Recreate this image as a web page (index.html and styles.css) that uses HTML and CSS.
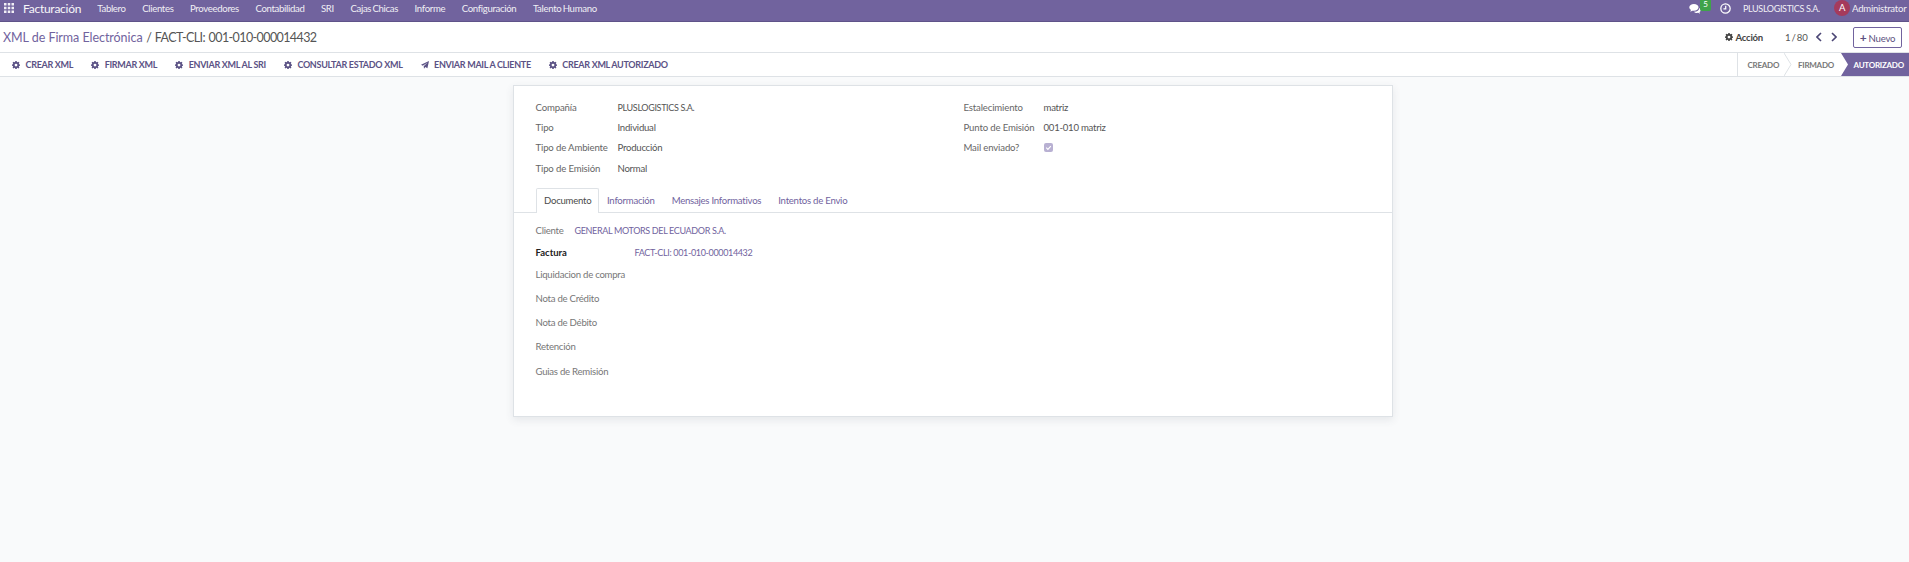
FILE: index.html
```html
<!DOCTYPE html>
<html lang="es">
<head>
    <meta charset="UTF-8">
    <meta name="viewport" content="width=device-width, initial-scale=1.0">
    <title>XML de Firma Electrónica</title>
    <link rel="stylesheet" href="styles.css">
</head>
<body>
    <svg width="0" height="0" class="defs">
        <symbol id="gear" viewBox="0 0 16 16">
            <path fill-rule="evenodd" d="M6.600 0h2.800l.4 2.200 1.200.5 1.900-1.300 2 2-1.300 1.900.5 1.200 1.900.3v2.800l-1.900.4-.5 1.200 1.300 1.800-2 2-1.900-1.300-1.200.5-.4 2.200H6.600l-.4-2.200-1.200-.5-1.900 1.300-2-2 1.300-1.800-.5-1.200L0 9.600V6.800l1.900-.3.5-1.200-1.300-1.900 2-2L5 2.700l1.200-.5zM8 5.300a2.800 2.800 0 1 0 0 5.600 2.800 2.800 0 0 0 0-5.600z"/>
        </symbol>
        <symbol id="plane" viewBox="0 0 16 16">
            <path d="M16 0 12.800 14.400 8.600 12.200 6 15.400 5.400 10.600 13.200 3 3.600 9.600 0 7.600z"/>
        </symbol>
    </svg>

    <nav class="navbar">
        <div class="nav-left">
            <svg class="apps" viewBox="0 0 12 12">
                <path d="M0 0h3v3H0zM4.500 0h3v3h-3zM9 0h3v3H9zM0 4.500h3v3H0zM4.500 4.500h3v3h-3zM9 4.500h3v3H9zM0 9h3v3H0zM4.500 9h3v3h-3zM9 9h3v3H9z"/>
            </svg>
            <span class="app-name">Facturación</span>
            <a>Tablero</a>
            <a>Clientes</a>
            <a>Proveedores</a>
            <a>Contabilidad</a>
            <a>SRI</a>
            <a>Cajas Chicas</a>
            <a>Informe</a>
            <a>Configuración</a>
            <a>Talento Humano</a>
        </div>
        <div class="nav-right">
            <span class="chat">
                <svg viewBox="0 0 16 14"><path d="M6.500 0C2.900 0 0 2 0 4.700c0 1.500.9 2.800 2.300 3.700L1.400 10.700l2.900-1.400c.7.100 1.400.200 2.200.200 3.600 0 6.500-2.100 6.500-4.800S10.100 0 6.500 0z"/><path d="M14 5.500c0 3-3 5.300-7 5.300h-.600c1 1 2.700 1.700 4.600 1.700.5 0 1-.100 1.500-.200l2.500 1.200-.7-2c1-.7 1.700-1.800 1.700-3 0-1.300-.8-2.400-2-3z"/></svg>
                <b class="badge">5</b>
            </span>
            <svg class="clock" viewBox="0 0 16 16"><circle cx="8" cy="8" r="6.800"/><path d="M8.300 4v4.500H5"/></svg>
            <span class="company caps">PLUSLOGISTICS S.A.</span>
            <span class="avatar">A</span>
            <span class="user">Administrator</span>
        </div>
    </nav>

    <div class="control-title">
        <div class="breadcrumb"><a>XML de Firma Electrónica</a> <span>/ FACT-CLI: 001-010-000014432</span></div>
        <div class="control-right">
            <span class="action"><svg class="ico"><use href="#gear"/></svg>Acción</span>
            <span class="pager">1 / 80</span>
            <svg class="chev" viewBox="0 0 6 10"><path d="M5 1 1 5l4 4"/></svg>
            <svg class="chev" viewBox="0 0 6 10"><path d="m1 1 4 4-4 4"/></svg>
            <button class="btn-new"><span class="plus">+</span>Nuevo</button>
        </div>
    </div>

    <div class="control-buttons">
        <div class="actions">
            <a><svg class="ico"><use href="#gear"/></svg>CREAR XML</a>
            <a><svg class="ico"><use href="#gear"/></svg>FIRMAR XML</a>
            <a><svg class="ico"><use href="#gear"/></svg>ENVIAR XML AL SRI</a>
            <a><svg class="ico"><use href="#gear"/></svg>CONSULTAR ESTADO XML</a>
            <a><svg class="ico"><use href="#plane"/></svg>ENVIAR MAIL A CLIENTE</a>
            <a><svg class="ico"><use href="#gear"/></svg>CREAR XML AUTORIZADO</a>
        </div>
        <div class="statusbar">
            <span class="st st-created">CREADO
                <svg class="st-arrow" viewBox="0 0 8 23"><path d="M0 0l7 11.500L0 23"/></svg>
            </span>
            <span class="st st-signed">FIRMADO</span>
            <span class="st st-done">AUTORIZADO</span>
        </div>
    </div>

    <main class="content">
        <section class="sheet">
            <div class="group">
                <div class="fields">
                    <div class="row"><label>Compañía</label><span class="caps">PLUSLOGISTICS S.A.</span></div>
                    <div class="row"><label>Tipo</label><span>Individual</span></div>
                    <div class="row"><label>Tipo de Ambiente</label><span>Producción</span></div>
                    <div class="row row-last"><label>Tipo de Emisión</label><span>Normal</span></div>
                </div>
                <div class="fields fields-right">
                    <div class="row"><label>Estalecimiento</label><span>matriz</span></div>
                    <div class="row"><label>Punto de Emisión</label><span>001-010 matriz</span></div>
                    <div class="row"><label>Mail enviado?</label><span class="check"><svg viewBox="0 0 10 10"><path d="m2.500 5.200 1.800 1.800 3.300-3.600"/></svg></span></div>
                </div>
            </div>

            <div class="tabs">
                <a class="tab active">Documento</a>
                <a class="tab">Información</a>
                <a class="tab">Mensajes Informativos</a>
                <a class="tab">Intentos de Envio</a>
            </div>

            <div class="tab-body">
                <div class="client"><label>Cliente</label><a class="caps">GENERAL MOTORS DEL ECUADOR S.A.</a></div>
                <div class="doc doc-invoice"><label>Factura</label><a class="caps">FACT-CLI: 001-010-000014432</a></div>
                <div class="doc doc-first"><label>Liquidacion de compra</label></div>
                <div class="doc"><label>Nota de Crédito</label></div>
                <div class="doc"><label>Nota de Débito</label></div>
                <div class="doc"><label>Retención</label></div>
                <div class="doc"><label>Guias de Remisión</label></div>
            </div>
        </section>
    </main>
</body>
</html>
```

FILE: styles.css
```css
* {
    box-sizing: border-box;
}

body {
    margin: 0;
    height: 562px;
    overflow: hidden;
    font-family: Lato, Roboto, sans-serif;
    font-size: 9.600px;
    letter-spacing: -0.250px;
    color: #555;
    background-color: #f9fafb;
    display: flex;
    flex-direction: column;
}

.defs {
    position: absolute;
}

.caps {
    font-size: 9px;
    letter-spacing: -0.350px;
}

/* top bar */
.navbar {
    height: 22px;
    flex: none;
    display: flex;
    justify-content: space-between;
    align-items: center;
    padding: 0 3px 5px 4px;
    background-color: #71639e;
    border-bottom: 1px solid #5f5389;
    color: #fff;
    white-space: nowrap;
}

.nav-left, .nav-right {
    display: flex;
    align-items: center;
}

.apps {
    width: 10px;
    height: 10px;
    fill: #fff;
    opacity: 0.9;
}

.app-name {
    font-size: 12px;
    letter-spacing: -0.250px;
    margin: 0 16px 0 9px;
    opacity: 0.95;
}

.nav-left a {
    margin-right: 16.500px;
    letter-spacing: -0.330px;
    word-spacing: -0.800px;
    opacity: 0.9;
}

.chat {
    position: relative;
    width: 22px;
    height: 16px;
    display: flex;
    align-items: center;
}

.chat svg {
    width: 12px;
    height: 10px;
    fill: #fff;
    margin-top: 2px;
}

.badge {
    position: absolute;
    left: 11px;
    top: 0;
    width: 11px;
    height: 11px;
    background-color: #3fa34a;
    border-radius: 0 0 2px 2px;
    font-size: 8px;
    line-height: 9px;
    font-weight: 400;
    text-align: center;
}

.clock {
    width: 11px;
    height: 11px;
    fill: none;
    stroke: #fff;
    stroke-width: 1.800;
    margin-left: 9px;
}

.company {
    width: 78px;
    margin: 0 13px 0 12px;
    opacity: 0.9;
}

.avatar {
    width: 16px;
    height: 16px;
    border-radius: 50%;
    background-color: #a53a5c;
    font-size: 9.500px;
    line-height: 16px;
    text-align: center;
    margin-right: 2px;
}

.user {
    width: 54px;
    opacity: 0.9;
}

/* control panel */
.control-title {
    height: 31px;
    flex: none;
    display: flex;
    justify-content: space-between;
    align-items: center;
    padding: 0 7px 0 3px;
    background-color: #fff;
    border-bottom: 1px solid #dee2e6;
}

.breadcrumb {
    font-size: 12.500px;
    letter-spacing: -0.600px;
    word-spacing: 1px;
    color: #555;
}

.breadcrumb a {
    color: #71639e;
    letter-spacing: -0.050px;
    word-spacing: 0;
}

.control-right {
    display: flex;
    align-items: center;
}

.ico {
    width: 8px;
    height: 8px;
    fill: currentColor;
    flex: none;
}

.action {
    display: flex;
    align-items: center;
    gap: 2px;
    color: #444;
    font-weight: 700;
}

.pager {
    width: 21px;
    margin: 0 10px 0 22px;
    white-space: nowrap;
    word-spacing: -1px;
}

.chev {
    width: 6px;
    height: 10px;
    fill: none;
    stroke: #4b4675;
    stroke-width: 1.600;
    margin-right: 9px;
}

.btn-new {
    width: 49px;
    height: 21px;
    margin-left: 7px;
    padding: 0;
    border: 1px solid #71639e;
    border-radius: 2px;
    background-color: #fff;
    color: #5c5080;
    font: inherit;
    letter-spacing: inherit;
}

.plus {
    font-size: 12px;
    font-weight: 700;
    margin-right: 2px;
}

.control-buttons {
    height: 24px;
    flex: none;
    display: flex;
    justify-content: space-between;
    padding-left: 12px;
    background-color: #fff;
    border-bottom: 1px solid #dee2e6;
}

.actions {
    display: flex;
    align-items: center;
    gap: 18px;
}

.actions a {
    display: flex;
    align-items: center;
    gap: 5.500px;
    font-size: 9px;
    letter-spacing: -0.300px;
    font-weight: 700;
    color: #5b5285;
}

.statusbar {
    display: flex;
    align-items: stretch;
    font-size: 8px;
    letter-spacing: -0.250px;
    font-weight: 700;
    color: #777;
}

.st {
    display: flex;
    align-items: center;
    position: relative;
}

.st-created {
    width: 60px;
    padding-left: 9.500px;
    border-left: 1px solid #dee2e6;
}

.st-arrow {
    position: absolute;
    right: 5px;
    top: 0;
    width: 8px;
    height: 23px;
    fill: none;
    stroke: #dee2e6;
}

.st-signed {
    width: 44px;
    padding-left: 1px;
}

.st-done {
    width: 68px;
    padding-left: 12.500px;
    color: #fff;
    background-color: #71639e;
    clip-path: polygon(0 0, 100% 0, 100% 100%, 0 100%, 7px 50%);
}

/* form sheet */
.content {
    flex: 1;
    display: flex;
    justify-content: center;
    padding-top: 8px;
}

.sheet {
    width: 880px;
    height: 332px;
    margin-left: -4px;
    background-color: #fff;
    border: 1px solid #dee2e6;
    box-shadow: 0 3px 8px rgba(60, 70, 90, 0.1);
}

.group {
    display: grid;
    grid-template-columns: 428px 1fr;
    padding: 11px 22px 0;
}

.row {
    display: flex;
    align-items: center;
    height: 20px;
}

.row-last {
    height: 22px;
}

.row label {
    width: 82px;
    color: #666;
    letter-spacing: -0.150px;
    white-space: nowrap;
}

.fields-right .row label {
    width: 80px;
}

.check {
    width: 9px;
    height: 9px;
    display: flex;
    border-radius: 2px;
    background-color: #b8b0d2;
}

.check svg {
    width: 9px;
    height: 9px;
    fill: none;
    stroke: #fff;
    stroke-width: 1.300;
}

.tabs {
    display: flex;
    height: 25px;
    margin-top: 9px;
    padding-left: 22px;
    border-bottom: 1px solid #dee2e6;
}

.tab {
    height: 25px;
    padding: 0 7.500px 1px;
    display: flex;
    align-items: center;
    color: #71639e;
    border: 1px solid transparent;
    border-bottom: 0;
}

.tab.active {
    width: 63px;
    color: #4c4c4c;
    background-color: #fff;
    border-color: #dee2e6;
    border-radius: 2px 2px 0 0;
}

.tab-body {
    padding: 6px 22px 0;
}

.tab-body label {
    color: #777;
}

.client {
    height: 22px;
    display: flex;
    align-items: center;
}

.client label {
    width: 39px;
}

.client a, .doc a {
    color: #71639e;
}

.doc {
    height: 24.400px;
    display: flex;
    align-items: center;
}

.doc-invoice {
    height: 22px;
}

.doc-invoice label {
    width: 99px;
    color: #222;
    font-size: 9.500px;
    letter-spacing: 0;
    font-weight: 700;
}

.doc-first {
    height: 23px;
}
```
